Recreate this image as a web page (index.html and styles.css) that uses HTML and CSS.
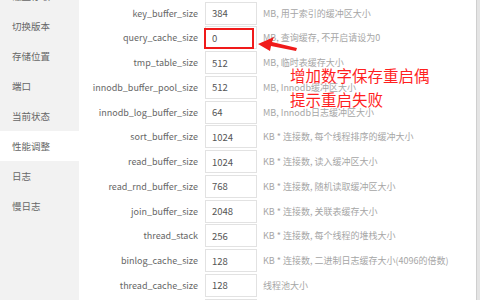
FILE: index.html
```html
<!DOCTYPE html>
<html>
<head>
  <meta charset="utf-8">
  <title>性能调整</title>
  <link rel="stylesheet" href="styles.css">
</head>
<body>
  <div class="page">
    <ul class="side-menu">
      <li>磁盘存取</li>
      <li>切换版本</li>
      <li>存储位置</li>
      <li>端口</li>
      <li>当前状态</li>
      <li class="active">性能调整</li>
      <li>日志</li>
      <li>慢日志</li>
    </ul>

    <div class="conf-list">
      <div class="conf-row"><span class="conf-name">key_buffer_size</span><input class="conf-input" value="384"><span class="conf-desc">MB, 用于索引的缓冲区大小</span></div>
      <div class="conf-row"><span class="conf-name">query_cache_size</span><input class="conf-input" value="0"><span class="conf-desc">MB, 查询缓存, 不开启请设为0</span></div>
      <div class="conf-row"><span class="conf-name">tmp_table_size</span><input class="conf-input" value="512"><span class="conf-desc">MB, 临时表缓存大小</span></div>
      <div class="conf-row"><span class="conf-name">innodb_buffer_pool_size</span><input class="conf-input" value="512"><span class="conf-desc">MB, Innodb缓冲区大小</span></div>
      <div class="conf-row"><span class="conf-name">innodb_log_buffer_size</span><input class="conf-input" value="64"><span class="conf-desc">MB, Innodb日志缓冲区大小</span></div>
      <div class="conf-row"><span class="conf-name">sort_buffer_size</span><input class="conf-input" value="1024"><span class="conf-desc">KB * 连接数, 每个线程排序的缓冲大小</span></div>
      <div class="conf-row"><span class="conf-name">read_buffer_size</span><input class="conf-input" value="1024"><span class="conf-desc">KB * 连接数, 读入缓冲区大小</span></div>
      <div class="conf-row"><span class="conf-name">read_rnd_buffer_size</span><input class="conf-input" value="768"><span class="conf-desc">KB * 连接数, 随机读取缓冲区大小</span></div>
      <div class="conf-row"><span class="conf-name">join_buffer_size</span><input class="conf-input" value="2048"><span class="conf-desc">KB * 连接数, 关联表缓存大小</span></div>
      <div class="conf-row"><span class="conf-name">thread_stack</span><input class="conf-input" value="256"><span class="conf-desc">KB * 连接数, 每个线程的堆栈大小</span></div>
      <div class="conf-row"><span class="conf-name">binlog_cache_size</span><input class="conf-input" value="128"><span class="conf-desc">KB * 连接数, 二进制日志缓存大小(4096的倍数)</span></div>
      <div class="conf-row"><span class="conf-name">thread_cache_size</span><input class="conf-input" value="128"><span class="conf-desc">线程池大小</span></div>
      <div class="conf-row"><span class="conf-name"></span><input class="conf-input" value=""></div>
    </div>

    <div class="scroll-bar"></div>

    <!-- annotation drawn over the screenshot -->
    <div class="mark-box"></div>
    <svg class="mark-arrow" width="44" height="20" viewBox="0 0 44 20">
      <path d="M1 8 L17 1 L15 6 L40 12 L39 15 L14 10 L13 15 Z" fill="#f01a1a"/>
    </svg>
    <p class="mark-text">增加数字保存重启偶<br>提示重启失败</p>
  </div>
</body>
</html>
```

FILE: styles.css
```css
body {
  margin: 0;
  overflow: hidden;
  font-family: "Noto Sans CJK SC", "Open Sans", sans-serif;
  font-size: 9px;
  color: #666;
}

.page {
  position: relative;
  display: flex;
  width: 480px;
  height: 300px;
  background: #fff;
  overflow: hidden;
}

.side-menu {
  flex: 0 0 79px;
  margin: 0;
  padding: 0;
  list-style: none;
  background: #f2f2f2;
}

.side-menu li {
  height: 30px;
  line-height: 30px;
  padding-left: 12px;
  font-size: 9.5px;
  color: #666;
}

.side-menu li:first-child {
  margin-top: -19px;
}

.side-menu li.active {
  background: #fff;
}

.conf-list {
  flex: 1;
  padding-top: 1.7px;
}

.conf-row {
  display: flex;
  align-items: center;
  height: 23px;
  margin-bottom: 1.75px;
  white-space: nowrap;
}

.conf-name {
  width: 126px;
  padding-right: 7px;
  box-sizing: border-box;
  text-align: right;
  color: #666;
}

.conf-input {
  width: 52px;
  height: 23px;
  box-sizing: border-box;
  padding: 0 6px;
  border: 1px solid #e2e2e2;
  border-radius: 0;
  font-family: inherit;
  font-size: 9.5px;
  color: #555;
  outline: none;
}

.conf-desc {
  margin-left: 6px;
  color: #a6a6a6;
}

.scroll-bar {
  flex: 0 0 3px;
  border-left: 1px solid #cfcfcf;
  background: #e4e4e4;
}

.mark-box {
  position: absolute;
  left: 204px;
  top: 28px;
  width: 50px;
  height: 21px;
  box-sizing: border-box;
  border: 2px solid #f01a1a;
}

.mark-arrow {
  position: absolute;
  left: 257px;
  top: 36px;
}

.mark-text {
  position: absolute;
  left: 290px;
  top: 63px;
  margin: 0;
  font-size: 15.5px;
  line-height: 24px;
  color: #ff1f1f;
}
```
